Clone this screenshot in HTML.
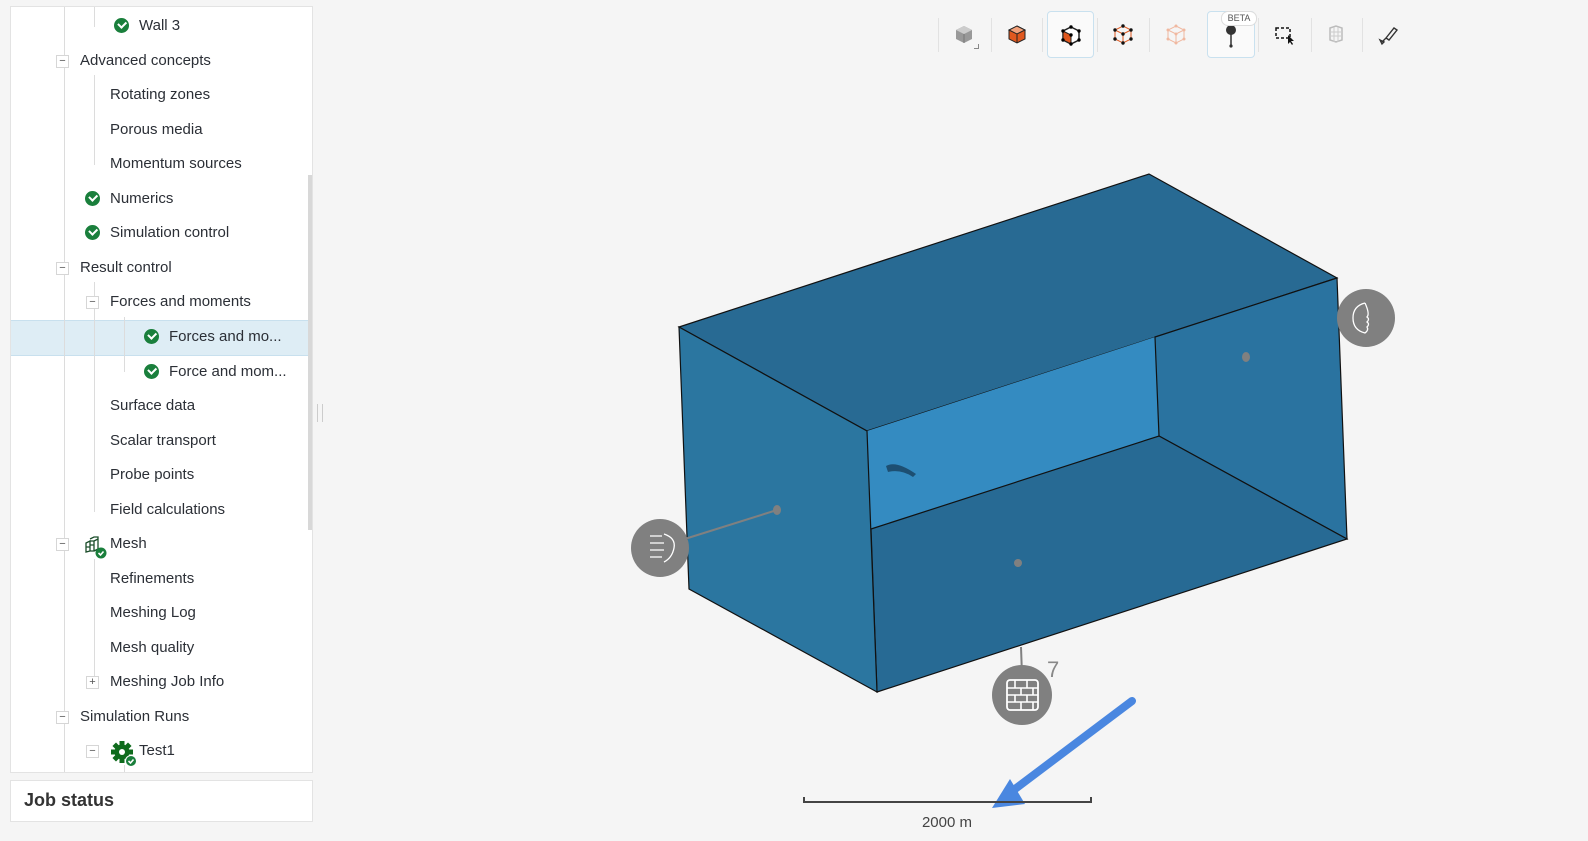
<!DOCTYPE html>
<html><head><style>
body{margin:0;width:1588px;height:841px;background:#f5f5f5;font-family:"Liberation Sans",sans-serif;overflow:hidden;position:relative}
.panel{position:absolute;left:10px;top:6px;width:303px;height:767px;background:#fff;border:1px solid #e3e3e3;box-sizing:border-box;overflow:hidden}
.t{position:absolute;font-size:15px;color:#2b2f36;white-space:nowrap;line-height:18px}
.vl{position:absolute;width:1px;background:#dcdcdc}
.bx{position:absolute;width:11px;height:11px;border:1px solid #d6d6d6;background:#fff;font-size:11px;line-height:10px;text-align:center;color:#555}
.ck{position:absolute;width:15px;height:15px;border-radius:50%;background:#1a7f3c}
.ck:after{content:"";position:absolute;left:4px;top:3px;width:6px;height:3.5px;border-left:2px solid #fff;border-bottom:2px solid #fff;transform:rotate(-45deg)}
.tb{position:absolute;top:11px;width:46px;height:46px;display:flex;align-items:center;justify-content:center}
.sep{position:absolute;top:18px;width:1px;height:34px;background:#e2e2e2}
</style></head><body>
<div class="panel">
 <div style="position:absolute;left:0;top:313px;width:297px;height:34px;background:#deedf5;border-top:1px solid #c8e0ee;border-bottom:1px solid #c8e0ee"></div>
 <div style="position:absolute;left:297px;top:168px;width:5px;height:355px;background:#d8d8d8"></div>
 <div class="vl" style="left:53px;top:0;height:767px"></div>
 <div class="vl" style="left:83px;top:0;height:20px"></div>
 <div class="vl" style="left:83px;top:68px;height:90px"></div>
 <div class="vl" style="left:83px;top:275px;height:230px"></div>
 <div class="vl" style="left:113px;top:310px;height:55px"></div>
 <div class="vl" style="left:83px;top:552px;height:125px"></div>
 <div class="vl" style="left:113px;top:758px;height:10px"></div>
</div>
<div class="ck" style="left:114px;top:18px"></div><div class="t" style="left:139px;top:17px">Wall 3</div>
<div class="bx" style="left:56px;top:55px">−</div><div class="t" style="left:80px;top:52px">Advanced concepts</div>
<div class="t" style="left:110px;top:86px">Rotating zones</div>
<div class="t" style="left:110px;top:121px">Porous media</div>
<div class="t" style="left:110px;top:155px">Momentum sources</div>
<div class="ck" style="left:85px;top:191px"></div><div class="t" style="left:110px;top:190px">Numerics</div>
<div class="ck" style="left:85px;top:225px"></div><div class="t" style="left:110px;top:224px">Simulation control</div>
<div class="bx" style="left:56px;top:262px">−</div><div class="t" style="left:80px;top:259px">Result control</div>
<div class="bx" style="left:86px;top:296px">−</div><div class="t" style="left:110px;top:293px">Forces and moments</div>
<div class="ck" style="left:144px;top:329px"></div><div class="t" style="left:169px;top:328px">Forces and mo...</div>
<div class="ck" style="left:144px;top:364px"></div><div class="t" style="left:169px;top:363px">Force and mom...</div>
<div class="t" style="left:110px;top:397px">Surface data</div>
<div class="t" style="left:110px;top:432px">Scalar transport</div>
<div class="t" style="left:110px;top:466px">Probe points</div>
<div class="t" style="left:110px;top:501px">Field calculations</div>
<div class="bx" style="left:56px;top:538px">−</div>
<svg style="position:absolute;left:84px;top:535px" width="24" height="24"><path d="M2 8l4-2v10l-4 1zM6 6h4v10H6zM6 4l4-2h4v12l-4 2M10 6l4-2M2 12h4M6 10h4" fill="none" stroke="#1b4d2a" stroke-width="1.3"/><circle cx="17" cy="18" r="5.5" fill="#1a7f3c"/><path d="M14.5 18l2 2 3-3.5" stroke="#fff" stroke-width="1.6" fill="none"/></svg>
<div class="t" style="left:110px;top:535px">Mesh</div>
<div class="t" style="left:110px;top:570px">Refinements</div>
<div class="t" style="left:110px;top:604px">Meshing Log</div>
<div class="t" style="left:110px;top:639px">Mesh quality</div>
<div class="bx" style="left:86px;top:676px">+</div><div class="t" style="left:110px;top:673px">Meshing Job Info</div>
<div class="bx" style="left:56px;top:711px">−</div><div class="t" style="left:80px;top:708px">Simulation Runs</div>
<div class="bx" style="left:86px;top:745px">−</div>
<svg style="position:absolute;left:110px;top:740px" width="28" height="28"><g fill="#0f6b1d" transform="translate(12 12)"><circle r="7.5"/><rect x="-2.5" y="-11" width="5" height="22"/><rect x="-2.5" y="-11" width="5" height="22" transform="rotate(45)"/><rect x="-2.5" y="-11" width="5" height="22" transform="rotate(90)"/><rect x="-2.5" y="-11" width="5" height="22" transform="rotate(135)"/></g><circle cx="12" cy="12" r="3" fill="#fff"/><circle cx="21" cy="21" r="5.5" fill="#1a7f3c" stroke="#fff"/><path d="M18.5 21l2 2 3-3.5" stroke="#fff" stroke-width="1.6" fill="none"/></svg>
<div class="t" style="left:139px;top:742px">Test1</div>
<div style="position:absolute;left:10px;top:780px;width:303px;height:42px;background:#fff;border:1px solid #e3e3e3;box-sizing:border-box"></div>
<div class="t" style="left:24px;top:791px;font-size:18px;font-weight:bold;color:#333">Job status</div>
<div style="position:absolute;left:317px;top:404px;width:4px;height:18px;border-left:1px solid #ccc;border-right:1px solid #ccc"></div>

<div class="sep" style="left:938px"></div><div class="sep" style="left:991px"></div><div class="sep" style="left:1042px"></div><div class="sep" style="left:1097px"></div><div class="sep" style="left:1149px"></div><div class="sep" style="left:1258px"></div><div class="sep" style="left:1311px"></div><div class="sep" style="left:1362px"></div>
<div class="tb" style="left:941px"><svg width="24" height="24"><path d="M12 4l8 4v9l-8 4-8-4V8z" fill="#999"/><path d="M4 8l8 4 8-4-8-4z" fill="#ccc"/><path d="M12 12v9" stroke="#777"/></svg></div>
<div style="position:absolute;left:974px;top:44px;width:4px;height:4px;border-right:1px solid #888;border-bottom:1px solid #888"></div>
<div class="tb" style="left:994px"><svg width="24" height="24"><path d="M12 4l8 4v9l-8 4-8-4V8z" fill="#e0581f" stroke="#222"/><path d="M4 8l8 4 8-4-8-4z" fill="#f2a07a" stroke="#222"/><path d="M12 12v9" stroke="#222"/></svg></div>
<div class="tb" style="left:1047px;border:1px solid #c9e1ef;border-radius:4px;background:#fafafa;width:45px;height:45px"><svg width="24" height="24"><path d="M12 4l8 4v9l-8 4-8-4V8z" fill="#fff" stroke="#222" stroke-width="1.5"/><path d="M4 8l8 4v9l-8-4z" fill="#e0581f" stroke="#222"/><circle cx="12" cy="4" r="1.7"/><circle cx="20" cy="8" r="1.7"/><circle cx="4" cy="8" r="1.7"/><circle cx="12" cy="12" r="1.7"/><circle cx="12" cy="21" r="1.7"/><circle cx="20" cy="17" r="1.7"/><circle cx="4" cy="17" r="1.7"/></svg></div>
<div class="tb" style="left:1100px"><svg width="24" height="24"><path d="M12 4l8 4v9l-8 4-8-4V8zM4 8l8 4 8-4M12 12v9" fill="none" stroke="#e0581f"/><g fill="#111"><circle cx="12" cy="4" r="1.7"/><circle cx="20" cy="8" r="1.7"/><circle cx="4" cy="8" r="1.7"/><circle cx="12" cy="12" r="1.7"/><circle cx="12" cy="21" r="1.7"/><circle cx="20" cy="17" r="1.7"/><circle cx="4" cy="17" r="1.7"/></g></svg></div>
<div class="tb" style="left:1153px"><svg width="24" height="24"><path d="M12 4l8 4v9l-8 4-8-4V8zM4 8l8 4 8-4M12 12v9" fill="none" stroke="#f0b8a0"/><g fill="#f0b8a0"><circle cx="12" cy="4" r="1.5"/><circle cx="20" cy="8" r="1.5"/><circle cx="4" cy="8" r="1.5"/><circle cx="12" cy="12" r="1.5"/><circle cx="12" cy="21" r="1.5"/><circle cx="20" cy="17" r="1.5"/><circle cx="4" cy="17" r="1.5"/></g></svg></div>
<div class="tb" style="left:1207px;border:1px solid #c9e1ef;border-radius:4px;background:#fafafa;width:46px;height:45px"><svg width="24" height="30"><circle cx="12" cy="10" r="5" fill="#333"/><path d="M12 14v12" stroke="#333" stroke-width="1.5"/><circle cx="12" cy="26" r="1.6" fill="#333"/></svg></div>
<div style="position:absolute;left:1221px;top:11px;width:34px;height:13px;border:1px solid #ddd;border-radius:7px;background:#fff;font-size:9px;color:#555;text-align:center;line-height:13px">BETA</div>
<div class="tb" style="left:1262px"><svg width="24" height="24"><rect x="3" y="6" width="14" height="10" fill="none" stroke="#111" stroke-width="1.5" stroke-dasharray="3 2"/><path d="M15 13l0 9 2-2 2 3 1-1-2-3h3z" fill="#111"/></svg></div>
<div class="tb" style="left:1313px"><svg width="24" height="24"><path d="M6 6l6-2 6 2v12l-6 2-6-2z" fill="none" stroke="#bbb" stroke-width="1.5"/><path d="M6 10h12M6 14h12M10 5v15M14 5v15" stroke="#ccc"/></svg></div>
<div class="tb" style="left:1365px"><svg width="24" height="24"><path d="M6 20l4-4M10 16l8-10 3 2-8 10z M4 18l4 2-2 2z" fill="none" stroke="#333" stroke-width="1.4"/></svg></div>

<svg style="position:absolute;left:0;top:0" width="1588" height="841">
<polygon points="679,327 1149,174 1337,278 867,431" fill="#286a93" stroke="#111" stroke-width="1.2"/>
<polygon points="867,431 1155,337 1159,436 871,529" fill="#348bc1"/>
<polygon points="1155,337 1337,278 1347,539 1159,436" fill="#2a73a0" stroke="#111" stroke-width="1.2"/>
<polygon points="871,529 1159,436 1347,539 877,692" fill="#276a94" stroke="#111" stroke-width="1.2"/>
<polygon points="679,327 867,431 877,692 689,589" fill="#2b76a0" stroke="#111" stroke-width="1.2"/>
<path d="M886 466q10-6 30 8l-3 3q-12-8-25-5z" fill="#1d4f72"/>
<ellipse cx="1246" cy="357" rx="4" ry="5" fill="#808080"/>
<ellipse cx="1018" cy="563" rx="4" ry="4" fill="#808080"/>
<ellipse cx="777" cy="510" rx="4" ry="5" fill="#808080"/>
<line x1="777" y1="510" x2="672" y2="543" stroke="#808080" stroke-width="2"/>
<line x1="1021" y1="647" x2="1022" y2="675" stroke="#808080" stroke-width="2"/>
<circle cx="660" cy="548" r="29" fill="#808080"/>
<path d="M650 536h12M650 543h14M650 550h14M650 557h12M664 534q12 4 10 14q-2 10-10 14" fill="none" stroke="#fff" stroke-width="1.3"/>
<circle cx="1366" cy="318" r="29" fill="#808080"/>
<path d="M1365 303q-12 3-12 15q0 12 12 15q4-3 2-6q3-3 0-5q3-3 0-5q3-3-2-14" fill="none" stroke="#fff" stroke-width="1.3"/>
<circle cx="1022" cy="695" r="30" fill="#808080"/>
<rect x="1007" y="680" width="31" height="30" rx="3" fill="none" stroke="#fff" stroke-width="1.8"/>
<path d="M1007 688h31M1007 695h31M1007 702h31M1015 680v8M1027 680v8M1021 688v7M1033 688v7M1015 695v7M1027 695v7M1021 702v8M1033 702v8" stroke="#fff" stroke-width="1.6"/>
<text x="1047" y="677" font-family="Liberation Sans" font-size="22" fill="#888">7</text>
<line x1="1132" y1="701" x2="1015" y2="789" stroke="#4a87e0" stroke-width="8" stroke-linecap="round"/>
<polygon points="992,808 1010,779 1025,804" fill="#4a87e0"/>
<path d="M804 797v5h287v-5" fill="none" stroke="#444" stroke-width="2"/>
<text x="947" y="827" text-anchor="middle" font-family="Liberation Sans" font-size="15" fill="#444">2000 m</text>
</svg>
</body></html>
